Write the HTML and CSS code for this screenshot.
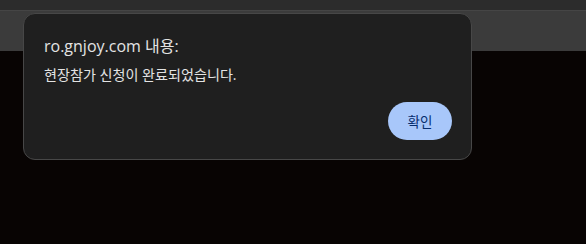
FILE: index.html
```html
<!DOCTYPE html>
<html lang="ko">
<head>
<meta charset="utf-8">
<link rel="stylesheet" href="styles.css">
</head>
<body>
<div class="chrome">
  <div class="tabstrip"></div>
  <div class="toolbar"></div>
</div>
<div class="page"></div>
<div class="dialog">
  <div class="title">ro.gnjoy.com 내용:</div>
  <div class="message">현장참가 신청이 완료되었습니다.</div>
  <div class="actions">
    <button class="ok">확인</button>
  </div>
</div>
</body>
</html>
```
FILE: styles.css
```css
html, body {
  margin: 0;
  padding: 0;
  width: 586px;
  height: 244px;
  overflow: hidden;
  background: #080403;
  font-family: "Open Sans", "Noto Sans CJK KR", sans-serif;
}
.chrome {
  display: flex;
  flex-direction: column;
}
.tabstrip {
  height: 10px;
  background: #2c2c2c;
  border-bottom: 1px solid #454545;
}
.toolbar {
  height: 40px;
  background: #3b3b3b;
}
.dialog {
  position: absolute;
  left: 23px;
  top: 13px;
  width: 447px;
  height: 145px;
  box-sizing: content-box;
  background: #1f1f1f;
  border: 1px solid #474747;
  border-radius: 12px;
  padding: 0;
  display: flex;
  flex-direction: column;
}
.title {
  margin: 22px 20px 0 20px;
  font-size: 16px;
  line-height: 20px;
  color: #e3e3e3;
}
.message {
  margin: 10px 20px 0 20px;
  font-size: 14.1px;
  line-height: 18px;
  color: #e3e3e3;
}
.actions {
  margin-top: auto;
  padding: 0 19px 19px 0;
  display: flex;
  justify-content: flex-end;
}
.ok {
  width: 64px;
  height: 38px;
  border: none;
  border-radius: 19px;
  background: #a8c7fa;
  color: #062e6f;
  font-family: "Noto Sans CJK KR", sans-serif;
  font-size: 13.5px;
  padding: 0;
}
```
